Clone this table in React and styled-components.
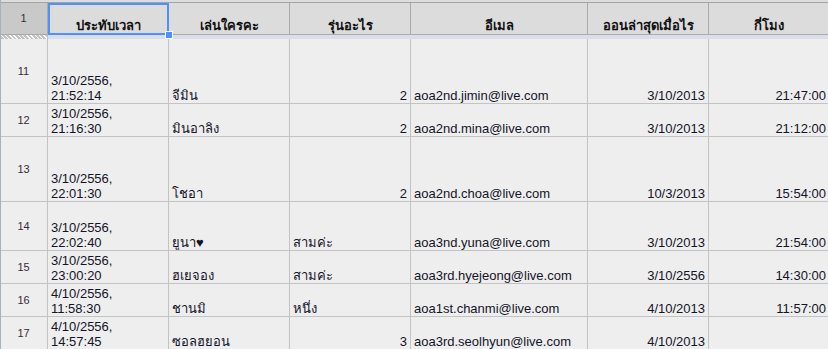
import React from "react";
import styled, { createGlobalStyle, css } from "styled-components";

const Global = createGlobalStyle`
  html, body { margin: 0; padding: 0; background: #eeeeee; overflow: hidden; }
  body { font-family: "Liberation Sans", Arial, "Noto Sans", sans-serif; }
`;

const COLS = "48px 121px 121px 121px 177px 121px 121px";

const Sheet = styled.div`
  width: 828px;
  height: 349px;
  overflow: hidden;
  display: flex;
  flex-direction: column;
  background: #eeeeee;
  border-left: 1px solid #a9b0c4;
  box-sizing: border-box;
`;

const TopStrip = styled.div`
  height: 3px;
  flex: none;
  background: #dddddd;
  border-bottom: 1px solid #a4a4a4;
  box-sizing: border-box;
`;

const Row = styled.div`
  display: grid;
  grid-template-columns: ${COLS};
  height: ${(p) => p.$h}px;
  flex: none;
  margin-left: -1px;
`;

const HeadNum = styled.div`
  background: #c9c9c9;
  border-right: 1px solid #ababab;
  border-bottom: 1px solid #ababab;
  box-sizing: border-box;
  display: flex;
  align-items: center;
  justify-content: center;
  font-size: 11px;
  color: #3a2a3a;
  padding-bottom: 1px;
`;

const HeadCell = styled.div`
  position: relative;
  background: #dcdcdc;
  border-right: 1px solid #ababab;
  border-bottom: 1px solid #ababab;
  box-sizing: border-box;
  display: flex;
  align-items: flex-end;
  justify-content: center;
  font-weight: bold;
  font-size: 13px;
  line-height: 16px;
  color: #111;
  padding-bottom: 0px;
  white-space: nowrap;
  ${(p) =>
    p.$selected &&
    css`
      border: none;
      box-shadow: inset 0 0 0 2px #4d90fe;
      padding-bottom: 1px;
    `}
`;

const Handle = styled.span`
  position: absolute;
  right: -3px;
  bottom: -3px;
  width: 6px;
  height: 6px;
  background: #4d90fe;
  border: 1px solid #ffffff;
  box-sizing: content-box;
  margin: -1px;
  z-index: 2;
`;

const FreezeHatch = styled.div`
  background: repeating-linear-gradient(
    45deg,
    #ffffff 0px,
    #ffffff 1px,
    #c4c4c4 1px,
    #c4c4c4 3px
  );
  border-right: 1px solid #c3c3c3;
`;

const FreezeBar = styled.div`
  grid-column: 2 / -1;
  background: #d9dee8;
`;

const NumCell = styled.div`
  border-right: 1px solid #c3c3c3;
  border-bottom: 1px solid #c3c3c3;
  box-sizing: border-box;
  display: flex;
  align-items: center;
  justify-content: center;
  font-size: 11px;
  color: #3a2a3a;
  background: #eeeeee;
`;

const Cell = styled.div`
  border-right: 1px solid #c3c3c3;
  border-bottom: 1px solid #c3c3c3;
  box-sizing: border-box;
  display: flex;
  align-items: flex-end;
  justify-content: ${(p) => (p.$right ? "flex-end" : "flex-start")};
  text-align: ${(p) => (p.$right ? "right" : "left")};
  padding: 0 3px 0 3px;
  font-size: 13px;
  line-height: 15px;
  color: #141428;
  white-space: pre-line;
  overflow: hidden;
  background: #eeeeee;
`;

const headers = [
  "ประทับเวลา",
  "เล่นใครคะ",
  "รุ่นอะไร",
  "อีเมล",
  "ออนล่าสุดเมื่อไร",
  "กี่โมง",
];

const rows = [
  { n: 11, h: 65, c: ["3/10/2556,\n21:52:14", "จีมิน", "2", "aoa2nd.jimin@live.com", "3/10/2013", "21:47:00"] },
  { n: 12, h: 33, c: ["3/10/2556,\n21:16:30", "มินอาลิง", "2", "aoa2nd.mina@live.com", "3/10/2013", "21:12:00"] },
  { n: 13, h: 65, c: ["3/10/2556,\n22:01:30", "โชอา", "2", "aoa2nd.choa@live.com", "10/3/2013", "15:54:00"] },
  { n: 14, h: 49, c: ["3/10/2556,\n22:02:40", "ยูนา♥", "สามค่ะ", "aoa3nd.yuna@live.com", "3/10/2013", "21:54:00"] },
  { n: 15, h: 33, c: ["3/10/2556,\n23:00:20", "ฮเยจอง", "สามค่ะ", "aoa3rd.hyejeong@live.com", "3/10/2556", "14:30:00"] },
  { n: 16, h: 33, c: ["4/10/2556,\n11:58:30", "ชานมิ", "หนึ่ง", "aoa1st.chanmi@live.com", "4/10/2013", "11:57:00"] },
  { n: 17, h: 33, c: ["4/10/2556,\n14:57:45", "ซอลฮยอน", "3", "aoa3rd.seolhyun@live.com", "4/10/2013", ""] },
];

const rightCols = [false, false, true, false, true, true];
const isNum = (s) => /^[0-9/:]+$/.test(s);

export default function App() {
  return (
    <>
      <Global />
      <Sheet>
        <TopStrip />
        <Row $h={32}>
          <HeadNum>1</HeadNum>
          {headers.map((h, i) => (
            <HeadCell key={h} $selected={i === 0}>
              {h}
              {i === 0 && <Handle />}
            </HeadCell>
          ))}
        </Row>
        <Row $h={4}>
          <FreezeHatch />
          <FreezeBar />
        </Row>
        {rows.map((r) => (
          <Row key={r.n} $h={r.h}>
            <NumCell>{r.n}</NumCell>
            {r.c.map((v, i) => (
              <Cell key={i} $right={rightCols[i] && isNum(v)}>
                {v}
              </Cell>
            ))}
          </Row>
        ))}
      </Sheet>
    </>
  );
}
